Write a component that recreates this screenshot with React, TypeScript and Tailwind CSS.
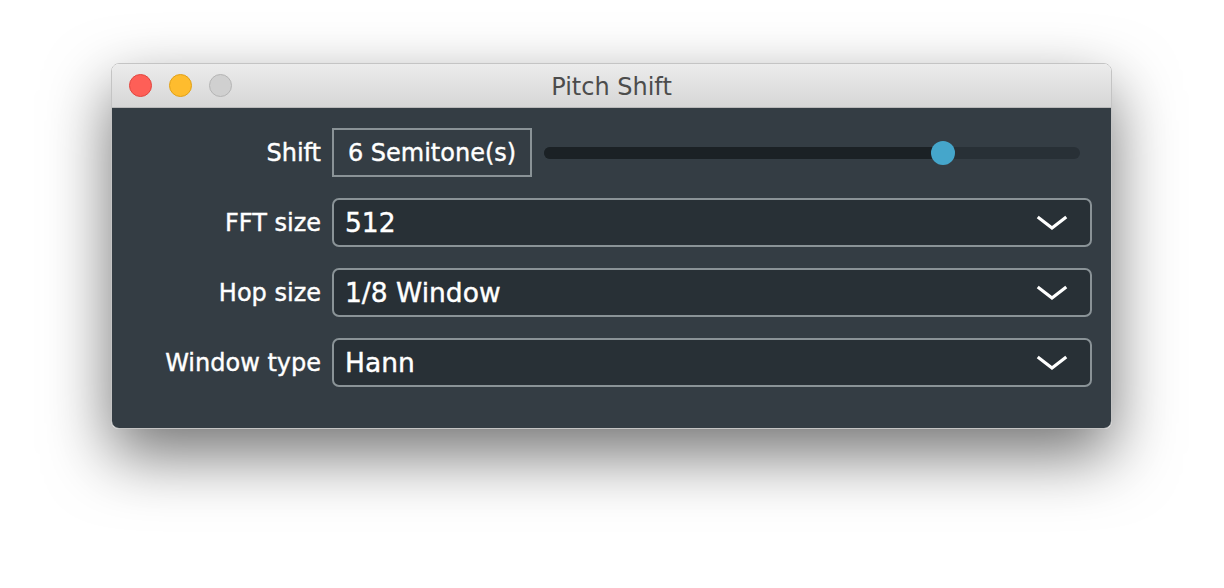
const rows = [
    { label: "FFT size", value: "512" },
    { label: "Hop size", value: "1/8 Window" },
    { label: "Window type", value: "Hann" },
];

function Chevron() {
    return (
        <svg width="32" height="16" viewBox="0 0 32 16" fill="none">
            <polyline points="3,3 16,13 29,3" stroke="white" strokeWidth="3.2" strokeLinecap="square" />
        </svg>
    );
}

function Select({ value }: { value: string }) {
    return (
        <div className="flex-1 h-[49px] flex items-center justify-between pl-[11px] pr-[22px] rounded-[7px] border-2 border-[#8a9397] bg-[#283036]">
            <span className="text-[26.5px] text-white [-webkit-text-stroke:0.4px_white]">{value}</span>
            <Chevron />
        </div>
    );
}

export default function App() {
    return (
        <div className="w-[1224px] h-[588px] bg-white pt-[63px] pl-[111px]" style={{ fontFamily: '"DejaVu Sans", "Open Sans", sans-serif' }}>
            <div className="w-[1001px] rounded-[8px] overflow-hidden shadow-[0_26px_64px_rgba(0,0,0,0.55)] border border-[#c4c4c4]">
                {/* title bar */}
                <div className="relative h-[44px] flex items-center justify-center bg-gradient-to-b from-[#ececec] to-[#d6d6d6] border-b border-[#b9b9b9]">
                    <div className="absolute left-[17px] top-[10px] flex gap-[17px]">
                        <div className="w-[23px] h-[23px] rounded-full bg-[#fe5f57] border border-[#e2463f]" />
                        <div className="w-[23px] h-[23px] rounded-full bg-[#febc2e] border border-[#e1a116]" />
                        <div className="w-[23px] h-[23px] rounded-full bg-[#d0d0d0] border border-[#b5b5b5]" />
                    </div>
                    <span className="pt-[3px] text-[24px] text-[#4c4c4c]">Pitch Shift</span>
                </div>
                {/* body */}
                <div className="bg-[#343d44] pt-[20px] pb-[41px] pr-[19px] flex flex-col gap-[21px] text-white [-webkit-text-stroke:0.4px_white]">
                    <div className="flex items-center">
                        <div className="w-[220px] pr-[11px] text-right text-[24px]">Shift</div>
                        <div className="w-[200px] h-[49px] border-2 border-[#8a9397] flex items-center justify-center text-[24px]">
                            6 Semitone(s)
                        </div>
                        <div className="relative ml-[12px] w-[536px] h-[12px] rounded-full bg-[#283036]">
                            <div className="h-full w-[399px] rounded-full bg-[#1b2125]" />
                            <div className="absolute left-[387px] top-[-6px] w-[24px] h-[24px] rounded-full bg-[#45a6cb]" />
                        </div>
                    </div>
                    {rows.map((r) => (
                        <div key={r.label} className="flex items-center">
                            <div className="w-[220px] pr-[11px] text-right text-[24px]">{r.label}</div>
                            <Select value={r.value} />
                        </div>
                    ))}
                </div>
            </div>
        </div>
    );
}
